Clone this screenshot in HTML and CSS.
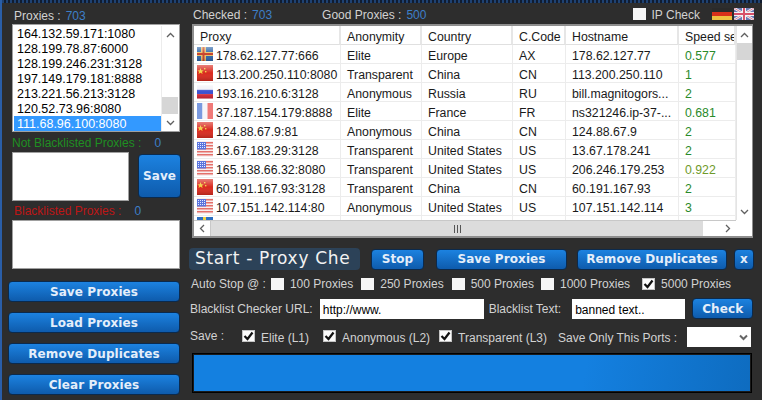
FILE: index.html
```html
<!DOCTYPE html>
<html lang="en">
<head>
<meta charset="utf-8">
<title>Proxy Checker</title>
<link rel="stylesheet" href="styles.css">
</head>
<body>
<svg class="defs" width="0" height="0" aria-hidden="true">
  <defs>
    <linearGradient id="shade" x1="0" y1="0" x2="0" y2="1">
      <stop offset="0" stop-color="#fff" stop-opacity=".4"/>
      <stop offset=".5" stop-color="#fff" stop-opacity="0"/>
      <stop offset="1" stop-color="#000" stop-opacity=".18"/>
    </linearGradient>
    <symbol id="f-ax" viewBox="0 0 16 16"><rect y="1" width="16" height="14" fill="#2f66a8"/><rect x="4" y="1" width="5" height="14" fill="#e8c06a"/><rect y="6" width="16" height="4" fill="#e8c06a"/><rect x="5.5" y="1" width="2" height="14" fill="#c8422a"/><rect y="7" width="16" height="2" fill="#c8422a"/><rect y="1" width="16" height="14" fill="url(#shade)"/></symbol>
    <symbol id="f-cn" viewBox="0 0 16 16"><rect width="16" height="16" fill="#d92a1e"/><path d="M3.500 3l.9 2.200 2.300.2-1.700 1.400.6 2.200-2.100-1.200-2 1.200.6-2.200L.4 5.400l2.300-.2z" fill="#f2d040"/><rect x="7" y="3" width="1.400" height="1.400" fill="#f2d040"/><rect x="8" y="6" width="1.400" height="1.400" fill="#f2d040"/><rect width="16" height="16" fill="url(#shade)"/></symbol>
    <symbol id="f-ru" viewBox="0 0 16 16"><rect y="1.500" width="16" height="4.300" fill="#f0f0f6"/><rect y="5.800" width="16" height="4.300" fill="#3a50d0"/><rect y="10.100" width="16" height="4.400" fill="#d82838"/><rect y="1.500" width="16" height="13" fill="url(#shade)"/></symbol>
    <symbol id="f-fr" viewBox="0 0 16 16"><rect width="5.500" height="16" fill="#7a9ae0"/><rect x="5.500" width="5" height="16" fill="#f6f6fa"/><rect x="10.500" width="5.500" height="16" fill="#f07a78"/></symbol>
    <symbol id="f-us" viewBox="0 0 16 16"><rect width="16" height="16" fill="#f8eeee"/><path d="M0 1h16v1.500H0zM0 4h16v1.500H0zM0 7h16v1.500H0zM0 10h16v1.500H0zM0 13h16v1.500H0z" fill="#e4706a"/><rect y="1" width="9" height="7.500" fill="#5a74dc"/><path d="M1 2.500h7M1 4.500h7M1 6.500h7" stroke="#e4eaff" stroke-dasharray="1 1"/></symbol>
    <symbol id="f-ua" viewBox="0 0 16 16"><rect width="16" height="8" fill="#2f6fc0"/><rect x="6" width="3" height="8" fill="#f0d040"/><rect y="8" width="16" height="8" fill="#f0d040"/></symbol>
  </defs>
</svg>
<main class="app">
  <aside class="side">
    <div class="label-row"><span class="label">Proxies :</span><span class="count">703</span></div>
    <div class="listbox">
      <ul class="list-items">
        <li>164.132.59.171:1080</li>
        <li>128.199.78.87:6000</li>
        <li>128.199.246.231:3128</li>
        <li>197.149.179.181:8888</li>
        <li>213.221.56.213:3128</li>
        <li>120.52.73.96:8080</li>
        <li class="selected">111.68.96.100:8080</li>
      </ul>
      <div class="vscroll list-scroll">
        <span class="sb-btn"><svg width="9" height="6" viewBox="0 0 9 6"><path d="M1 5l3.500-3.500L8 5" fill="none" stroke="#606060" stroke-width="1.300"/></svg></span>
        <span class="sb-track list-track"><i class="sb-thumb list-thumb"></i></span>
        <span class="sb-btn"><svg width="9" height="6" viewBox="0 0 9 6"><path d="M1 1l3.500 3.500L8 1" fill="none" stroke="#606060" stroke-width="1.300"/></svg></span>
      </div>
    </div>
    <div class="label-row good-row"><span class="label green">Not Blacklisted Proxies :</span><span class="count">0</span></div>
    <div class="good-box"><div class="textarea small"></div><button class="btn save-mini">Save</button></div>
    <div class="label-row bad-row"><span class="label red">Blacklisted Proxies :</span><span class="count">0</span></div>
    <div class="textarea wide"></div>
    <div class="side-buttons">
      <button class="btn">Save Proxies</button>
      <button class="btn">Load Proxies</button>
      <button class="btn">Remove Duplicates</button>
      <button class="btn">Clear Proxies</button>
    </div>
  </aside>
  <section class="content">
    <header class="top">
      <span class="label">Checked :</span><span class="count">703</span>
      <span class="label good">Good Proxies :</span><span class="count">500</span>
      <span class="spacer"></span>
      <span class="box"></span><span class="label ipcheck">IP Check</span>
      <span class="lang">
        <svg width="20" height="12" viewBox="0 0 20 12"><rect width="20" height="4" fill="#2a2a2a"/><rect y="4" width="20" height="4" fill="#d8301a"/><rect y="8" width="20" height="4" fill="#eec040"/></svg>
        <svg width="20" height="12" viewBox="0 0 20 12"><rect width="20" height="12" fill="#6a78b4"/><path d="M0 0l20 12M20 0L0 12" stroke="#f2f2f6" stroke-width="2.500"/><path d="M0 0l20 12M20 0L0 12" stroke="#d86a80" stroke-width=".8"/><path d="M10 0v12M0 6h20" stroke="#f2f2f6" stroke-width="4"/><path d="M10 0v12M0 6h20" stroke="#d8506a" stroke-width="2"/></svg>
      </span>
    </header>
    <div class="grid-frame">
      <div class="grid-main">
        <div class="grid-clip">
        <table class="grid">
          <thead><tr><th class="c1">Proxy</th><th class="c2">Anonymity</th><th class="c3">Country</th><th class="c4">C.Code</th><th class="c5">Hostname</th><th class="c6">Speed se</th></tr></thead>
          <tbody>
            <tr><td class="proxy"><svg class="flag"><use href="#f-ax"/></svg>178.62.127.77:666</td><td>Elite</td><td>Europe</td><td>AX</td><td>178.62.127.77</td><td class="speed">0.577</td></tr>
            <tr><td class="proxy"><svg class="flag"><use href="#f-cn"/></svg>113.200.250.110:8080</td><td>Transparent</td><td>China</td><td>CN</td><td>113.200.250.110</td><td class="speed">1</td></tr>
            <tr><td class="proxy"><svg class="flag"><use href="#f-ru"/></svg>193.16.210.6:3128</td><td>Anonymous</td><td>Russia</td><td>RU</td><td>bill.magnitogors...</td><td class="speed">2</td></tr>
            <tr><td class="proxy"><svg class="flag"><use href="#f-fr"/></svg>37.187.154.179:8888</td><td>Elite</td><td>France</td><td>FR</td><td>ns321246.ip-37-...</td><td class="speed">0.681</td></tr>
            <tr><td class="proxy"><svg class="flag"><use href="#f-cn"/></svg>124.88.67.9:81</td><td>Anonymous</td><td>China</td><td>CN</td><td>124.88.67.9</td><td class="speed">2</td></tr>
            <tr><td class="proxy"><svg class="flag"><use href="#f-us"/></svg>13.67.183.29:3128</td><td>Transparent</td><td>United States</td><td>US</td><td>13.67.178.241</td><td class="speed">2</td></tr>
            <tr><td class="proxy"><svg class="flag"><use href="#f-us"/></svg>165.138.66.32:8080</td><td>Transparent</td><td>United States</td><td>US</td><td>206.246.179.253</td><td class="speed olive">0.922</td></tr>
            <tr><td class="proxy"><svg class="flag"><use href="#f-cn"/></svg>60.191.167.93:3128</td><td>Transparent</td><td>China</td><td>CN</td><td>60.191.167.93</td><td class="speed">2</td></tr>
            <tr><td class="proxy"><svg class="flag"><use href="#f-us"/></svg>107.151.142.114:80</td><td>Anonymous</td><td>United States</td><td>US</td><td>107.151.142.114</td><td class="speed">3</td></tr>
            <tr><td class="proxy"><svg class="flag"><use href="#f-ua"/></svg></td><td></td><td></td><td></td><td></td><td></td></tr>
          </tbody>
        </table>
        </div>
        <div class="hscroll">
          <span class="sb-btn h left"><svg width="6" height="9" viewBox="0 0 6 9"><path d="M5 1L1.500 4.500 5 8" fill="none" stroke="#606060" stroke-width="1.300"/></svg></span>
          <span class="h-track"><i class="h-thumb"><svg width="7" height="8" viewBox="0 0 7 8"><path d="M.5 0v8M3.500 0v8M6.500 0v8" stroke="#555"/></svg></i></span>
          <span class="sb-btn h"><svg width="6" height="9" viewBox="0 0 6 9"><path d="M1 1l3.500 3.500L1 8" fill="none" stroke="#606060" stroke-width="1.300"/></svg></span>
        </div>
      </div>
      <div class="vscroll grid-scroll">
        <span class="sb-btn"><svg width="9" height="6" viewBox="0 0 9 6"><path d="M1 5l3.500-3.500L8 5" fill="none" stroke="#606060" stroke-width="1.300"/></svg></span>
        <span class="sb-track"><i class="sb-thumb grid-thumb"></i></span>
        <span class="sb-btn"><svg width="9" height="6" viewBox="0 0 9 6"><path d="M1 1l3.500 3.500L8 1" fill="none" stroke="#606060" stroke-width="1.300"/></svg></span>
      </div>
    </div>
    <div class="actions">
      <div class="start"><span>Start - Proxy Che</span></div>
      <button class="btn stop">Stop</button>
      <button class="btn save-all">Save Proxies</button>
      <button class="btn dupes">Remove Duplicates</button>
      <button class="btn close">x</button>
    </div>
    <div class="auto-row">
      <span class="label auto-label">Auto Stop @ :</span>
      <span class="box"></span><span class="label a1">100 Proxies</span>
      <span class="box"></span><span class="label a2">250 Proxies</span>
      <span class="box"></span><span class="label a3">500 Proxies</span>
      <span class="box"></span><span class="label a4">1000 Proxies</span>
      <span class="box on"><svg width="11" height="10" viewBox="0 0 11 10"><path d="M1.500 5l3 3 5-6.500" fill="none" stroke="#111" stroke-width="2.200"/></svg></span><span class="label">5000 Proxies</span>
    </div>
    <div class="url-row">
      <span class="label url-label">Blacklist Checker URL:</span>
      <span class="input url">http://www.</span>
      <span class="label text-label">Blacklist Text:</span>
      <span class="input text">banned text..</span>
      <button class="btn check">Check</button>
    </div>
    <div class="save-row">
      <span class="label save-label">Save :</span>
      <span class="box on"><svg width="11" height="10" viewBox="0 0 11 10"><path d="M1.500 5l3 3 5-6.500" fill="none" stroke="#111" stroke-width="2.200"/></svg></span><span class="label low s1">Elite (L1)</span>
      <span class="box on"><svg width="11" height="10" viewBox="0 0 11 10"><path d="M1.500 5l3 3 5-6.500" fill="none" stroke="#111" stroke-width="2.200"/></svg></span><span class="label low s2">Anonymous (L2)</span>
      <span class="box on"><svg width="11" height="10" viewBox="0 0 11 10"><path d="M1.500 5l3 3 5-6.500" fill="none" stroke="#111" stroke-width="2.200"/></svg></span><span class="label low s3">Transparent (L3)</span>
      <span class="label low ports">Save Only This Ports :</span>
      <span class="select"><svg width="9" height="7" viewBox="0 0 9 7"><path d="M1 1.500l3.500 3.500L8 1.500" fill="none" stroke="#666" stroke-width="2"/></svg></span>
    </div>
    <div class="progress"><div class="progress-fill"></div></div>
  </section>
</main>
</body>
</html>
```
FILE: styles.css
```css
* { box-sizing: border-box; }
html, body { margin: 0; padding: 0; }
body { width: 762px; height: 400px; overflow: hidden; background: #2d2d2d; font-family: "Liberation Sans", Arial, sans-serif; font-size: 12px; color: #000; }
.defs { position: absolute; }
.app { display: flex; width: 762px; height: 400px; padding-top: 3px; border-left: 2px solid #2a5ea8; background: repeating-linear-gradient(90deg, #1f4272 0 2px, #101c30 2px 4px) top left / 100% 3px no-repeat, #2d2d2d; }
.side { width: 186px; flex: none; padding: 6px 0 0 6px; display: flex; flex-direction: column; }
.content { flex: 1; min-width: 0; padding: 5px 0 0 1px; display: flex; flex-direction: column; }
.label { color: #d2d2d2; font-size: 12px; line-height: 14px; white-space: nowrap; }
.count { color: #3d7fc8; font-size: 12px; line-height: 14px; margin-left: 5px; }
.green { color: #1f8f22; }
.red { color: #bd1616; }
.label-row { display: flex; height: 14px; padding-left: 6px; }
.listbox { display: flex; margin: 1px 0 0 4px; width: 168px; height: 108px; background: #fff; border: 1px solid #a0a0a0; padding: 1px 1px 0; }
.list-items { flex: 1; margin: 0; padding: 0; list-style: none; font-size: 12.5px; line-height: 15px; }
.list-items li { padding: 1px 0 0 3px; height: 15px; white-space: nowrap; }
.list-items .selected { background: #3399ff; color: #fff; }
.vscroll { width: 16px; flex: none; display: flex; flex-direction: column; background: #fff; }
.list-scroll { width: 17px; border-left: 1px solid #ececec; }
.sb-btn { height: 17px; flex: none; display: flex; align-items: center; justify-content: center; background: #fff; }
.sb-btn.h { width: 17px; height: 100%; }
.sb-btn.left { border-right: 1px solid #c8c8c8; }
.sb-track { flex: 1; display: flex; flex-direction: column; }
.list-track { justify-content: flex-end; }
.sb-thumb { display: block; background: #d6d6d6; }
.list-thumb { height: 17px; }
.grid-thumb { height: 17px; }
.good-row { margin-top: 4px; padding-left: 4px; }
.good-row .count { margin-left: 13px; }
.good-box { display: flex; margin: 2px 0 0 4px; }
.textarea { background: #fff; border: 1px solid #a0a0a0; }
.small { width: 117px; height: 49px; flex: none; }
.wide { width: 168px; height: 49px; margin-left: 4px; margin-top: 2px; flex: none; }
.save-mini { width: 43px; height: 44px; margin: 2px 0 0 9px; font-size: 13px; }
.bad-row { margin-top: 3px; }
.bad-row .count { margin-left: 13px; }
.btn { display: block; flex: none; padding: 0; border: 1px solid #0b2a4d; border-radius: 4px; background: linear-gradient(#1c82e0, #0e5bac); color: #e4eefa; font-family: "DejaVu Sans", Verdana, sans-serif; font-weight: 700; font-size: 12px; letter-spacing: .1px; line-height: 1; text-align: center; }
.side-buttons { display: flex; flex-direction: column; gap: 10px; margin-top: 12px; }
.side-buttons .btn { width: 172px; height: 21px; }
.top { display: flex; align-items: center; height: 14px; padding: 0 8px 0 4px; }
.good { margin-left: 50px; }
.spacer { flex: 1; }
.box { width: 13px; height: 12px; flex: none; background: #f6f6f6; display: flex; align-items: center; justify-content: center; }
.box.on { background: #fbfbfb; border: 1px solid #c4c4c4; }
.top .box { margin-top: -2px; }
.ipcheck { margin-left: 6px; }
.lang { display: flex; gap: 2px; margin: -2px 0 0 12px; flex: none; }
.grid-frame { display: flex; flex: none; width: 561px; height: 214px; margin: 2px 0 0 3px; background: #fff; border: 2px solid #8e8e8e; border-right-width: 1px; }
.grid-main { flex: 1; min-width: 0; display: flex; flex-direction: column; }
.grid-clip { flex: 1; min-height: 0; overflow: hidden; }
.grid { border-collapse: separate; border-spacing: 0; table-layout: fixed; width: 542px; font-size: 12.3px; line-height: 14px; color: #1a1a1a; }
.grid th { height: 19px; padding: 5px 0 0 6px; line-height: 13px; font-weight: 400; text-align: left; vertical-align: top; border-right: 2px solid #e6e6e6; border-bottom: 1px solid #e0e0e0; white-space: nowrap; overflow: hidden; }
.grid td { height: 19px; padding: 4px 0 0 6px; vertical-align: top; border-right: 1px solid #ececec; border-bottom: 1px solid #ececec; white-space: nowrap; overflow: hidden; }
.c1 { width: 147px; } .c2 { width: 81px; } .c3 { width: 91px; } .c4 { width: 53px; } .c5 { width: 113px; } .c6 { width: 57px; }
.grid td.proxy { padding-left: 3px; }
.flag { float: left; width: 16px; height: 16px; margin: -3px 3px 0 0; }
.speed { color: #2a8a2a; }
.olive { color: #6f9a2a; }
.hscroll { flex: none; height: 16px; display: flex; background: #fff; border-top: 1px solid #c8c8c8; }
.h-track { flex: 1; display: flex; }
.h-thumb { display: flex; align-items: center; justify-content: center; width: 492px; background: #dcdcdc; }
.grid-scroll { margin-bottom: 16px; border-left: 1px solid #e4e4e4; }
.actions { display: flex; flex: none; margin-top: 10px; align-items: center; }
.start { width: 171px; height: 22px; flex: none; border-radius: 4px; background: #2c4258; color: #f2f2f2; font-family: "DejaVu Sans", Verdana, sans-serif; font-size: 17px; line-height: 21px; padding-left: 6px; overflow: hidden; white-space: nowrap; letter-spacing: .7px; }
.stop { width: 53px; height: 21px; margin-left: 11px; }
.save-all { width: 131px; height: 21px; margin-left: 12px; }
.dupes { width: 150px; height: 21px; margin-left: 10px; }
.close { width: 20px; height: 21px; margin-left: 7px; }
.auto-row { display: flex; align-items: center; flex: none; height: 13px; margin-top: 7px; padding-left: 2px; }
.auto-label { margin-right: 5px; }
.auto-row .box { margin-right: 6px; }
.a1, .a2 { margin-right: 8px; }
.a3 { margin-right: 7px; }
.a4 { margin-right: 12px; }
.url-row { display: flex; align-items: center; flex: none; height: 21px; margin-top: 8px; padding-left: 1px; }
.input { height: 20px; flex: none; background: #fff; color: #000; font-size: 12px; line-height: 23px; padding-left: 3px; white-space: nowrap; }
.url { width: 164px; margin-left: 7px; }
.text-label { margin-left: 5px; }
.text { width: 113px; margin-left: 11px; }
.check { width: 61px; height: 21px; margin-left: 7px; }
.save-row { display: flex; align-items: center; flex: none; height: 20px; margin-top: 8px; padding-left: 1px; }
.save-label { width: 52px; flex: none; margin-top: -2px; }
.low { padding-top: 2px; }
.save-row .box { margin-right: 6px; margin-top: -3px; }
.s1 { margin-right: 14px; }
.s2 { margin-right: 9px; }
.s3 { margin-right: 11px; }
.select { display: flex; align-items: center; justify-content: flex-end; padding-right: 3px; width: 64px; height: 20px; flex: none; margin-left: 10px; background: #fff; }
.progress { width: 560px; height: 40px; flex: none; margin: 6px 0 0 3px; background: #1a1a1a; border: 1px solid #000; padding: 1px; }
.progress-fill { height: 100%; background: linear-gradient(100deg, #1480e0 70%, #0e6cc0); }
```
